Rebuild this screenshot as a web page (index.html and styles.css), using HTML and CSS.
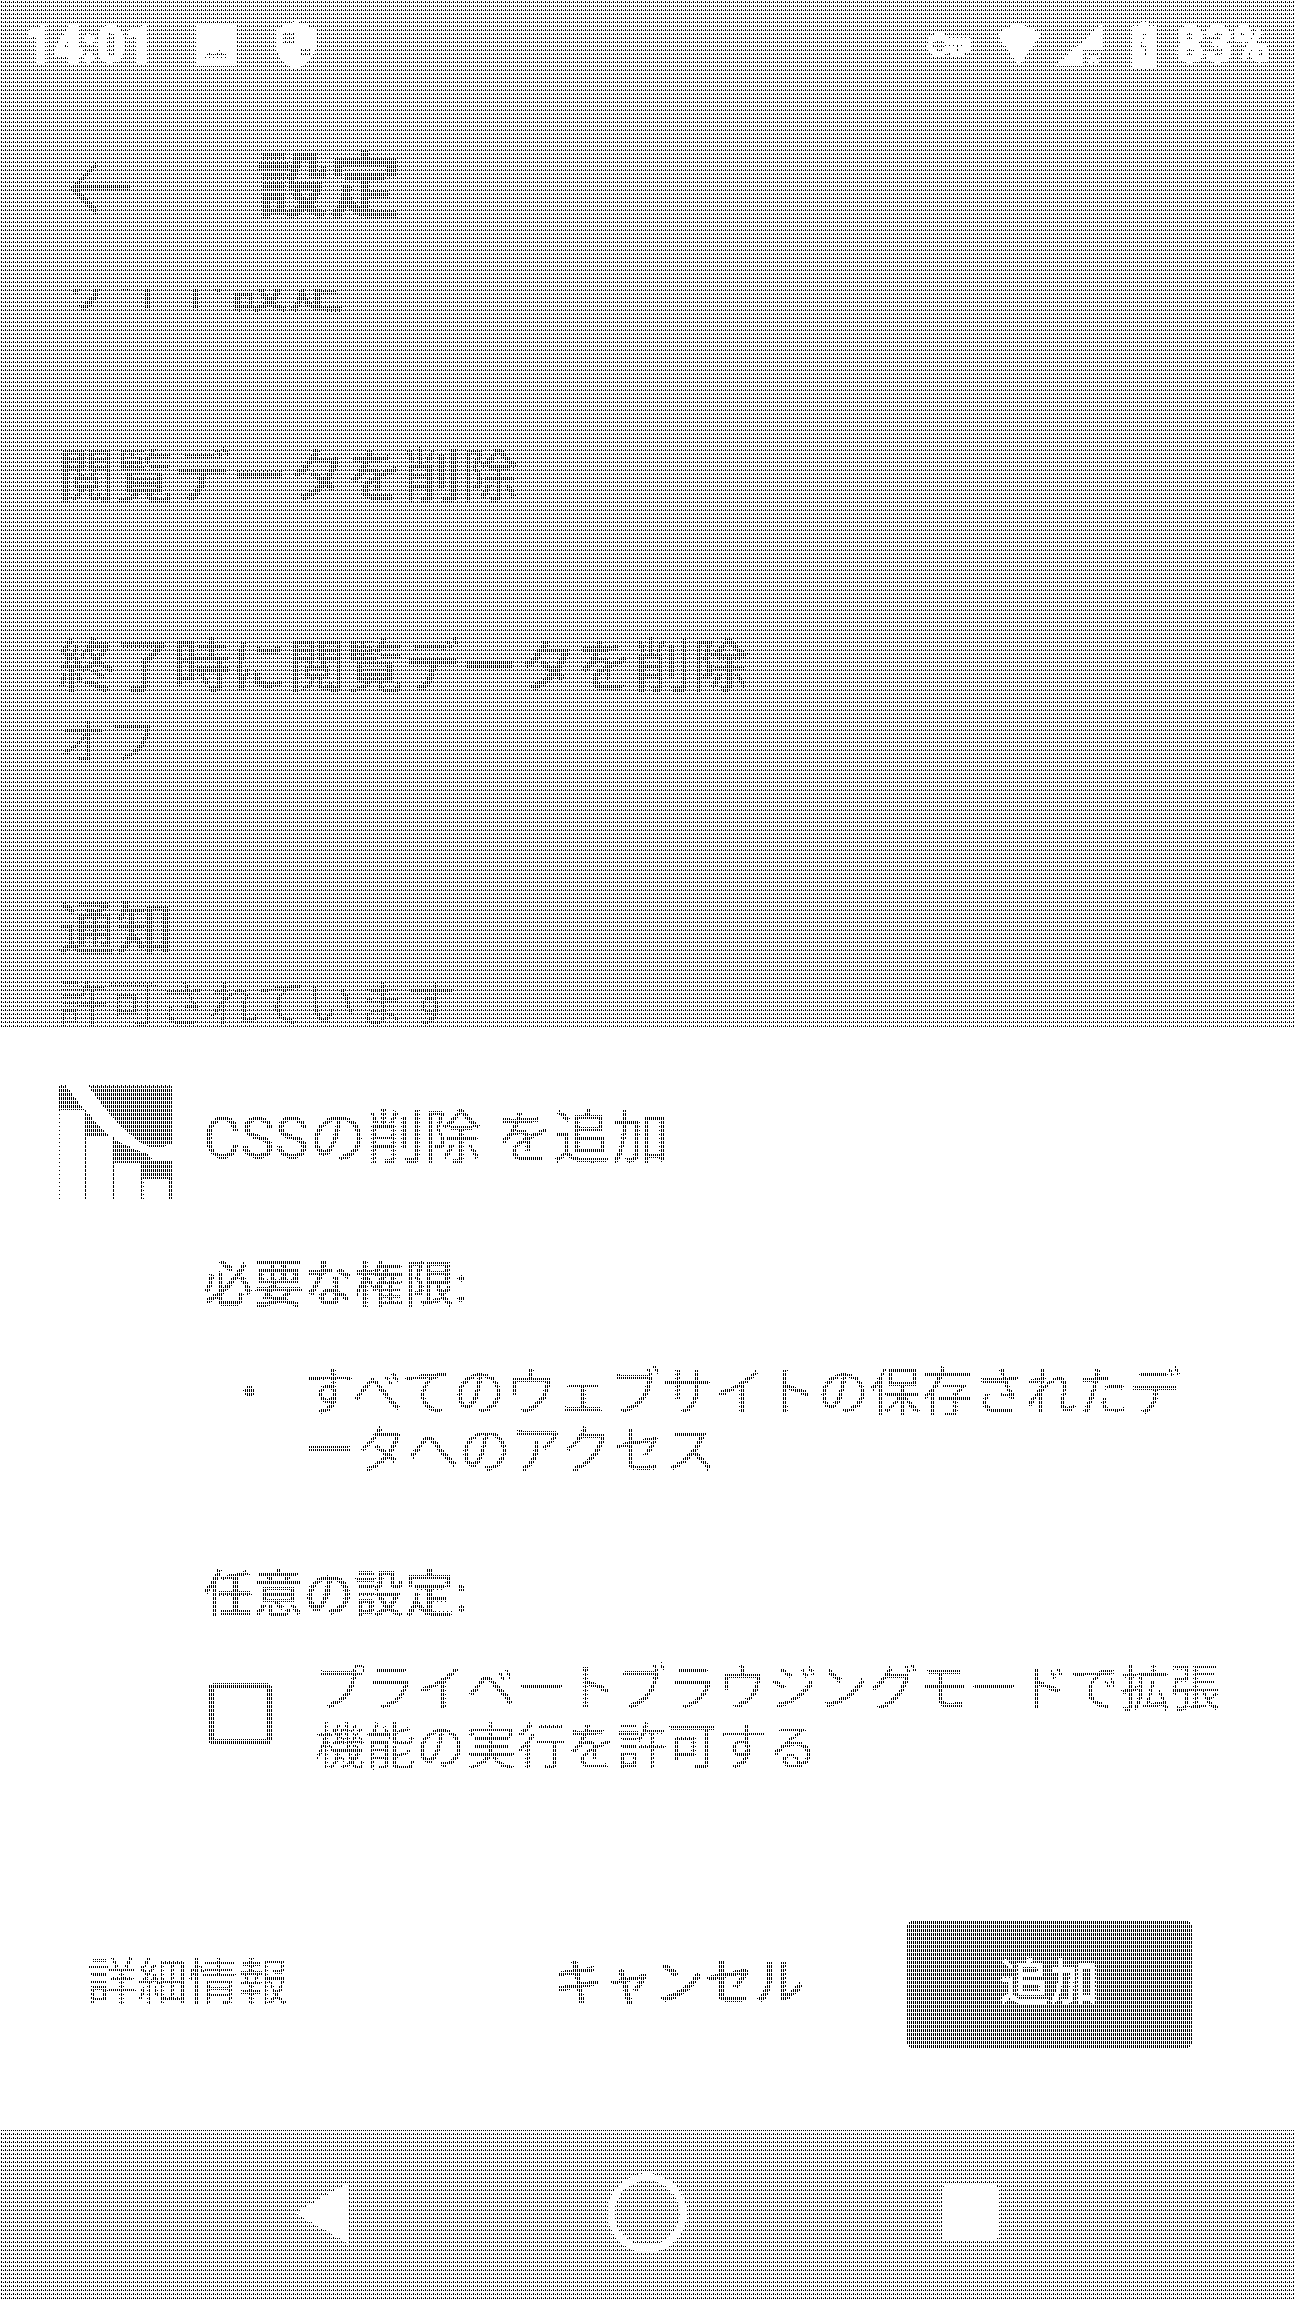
FILE: index.html
```html
<!DOCTYPE html>
<html lang="ja">
<head>
<meta charset="utf-8">
<title>設定</title>
<link rel="stylesheet" href="styles.css">
</head>
<body>
<svg class="defs" width="0" height="0">
  <filter id="threshold" x="0" y="0" width="100%" height="100%" color-interpolation-filters="sRGB">
    <feColorMatrix type="saturate" values="0"/>
    <feComponentTransfer>
      <feFuncR type="linear" slope="255" intercept="-254"/>
      <feFuncG type="linear" slope="255" intercept="-254"/>
      <feFuncB type="linear" slope="255" intercept="-254"/>
    </feComponentTransfer>
  </filter>
</svg>
<div class="screen">
  <header class="status">
    <span class="time">14:01</span>
    <svg class="ic-photo" viewBox="0 0 40 42"><rect width="40" height="42" class="w"/><path d="M6 34 H34 L24 26 L18 30 L15 28Z" class="g"/></svg>
    <svg class="ic-shield" viewBox="0 0 40 48"><path d="M20 0 L40 8 V24 C40 36 30 44 20 48 C10 44 0 36 0 24 V8Z" class="w"/><path d="M6 10 H18 V24 H6Z M24 26 H34 V36 H24Z" class="g"/></svg>
    <span class="grow"></span>
    <svg class="ic-key" viewBox="0 0 44 28"><path d="M3 14 a9 9 0 0 1 17 -4 H41 V18 H35 V23 H27 V18 H20 a9 9 0 0 1 -17 -4Z" class="o"/></svg>
    <svg class="ic-wifi" viewBox="0 0 44 40"><path d="M0 10 Q22 -10 44 10 L22 40Z" class="w"/></svg>
    <svg class="ic-signal" viewBox="0 0 45 40"><path d="M0 40 L45 0 V25 H27 V40Z" class="w"/><path d="M31 29 L43 39 M43 29 L31 39" class="x"/></svg>
    <svg class="ic-batt" viewBox="0 0 23 46"><path d="M7 0 H16 V4 H23 V46 H0 V4 H7Z" class="w"/><path d="M12 10 L8 25 H12 V34" class="b"/></svg>
    <span class="pct">83%</span>
  </header>
  <main class="backdrop">
    <div class="toolbar">
      <svg class="ic-back" viewBox="0 0 64 54"><path d="M62 27 H5 M28 3 L4 27 L28 51" class="a"/></svg>
      <h1 class="title">設定</h1>
    </div>
    <div class="list">
      <p class="row">サイト設定</p>
      <p class="row">閲覧データを削除</p>
      <p class="row">終了時に閲覧データを削除</p>
      <p class="sub">オフ</p>
      <p class="row">通知</p>
      <p class="sub">許可されています</p>
    </div>
  </main>
  <section class="sheet">
    <div class="head">
      <svg class="logo" viewBox="57 75 340 340">
        <path d="M57 75 H80 L135 148 H57Z M138 160 H148 L210 228 H138Z M220 240 H232 Q280 265 335 285 V305 H220Z M147 75 H397 V248 Q340 275 290 235 Q210 170 147 75Z M305 300 H397 V355 H305Z M57 148 H61 V415 H57Z M136 148 H143 V415 H136Z M220 228 H227 V415 H220Z M305 355 H311 V415 H305Z M388 355 H397 V415 H388Z"/>
      </svg>
      <span class="name">CSSの削除 を追加</span>
    </div>
    <h2 class="label">必要な権限:</h2>
    <div class="perm"><span class="dot">・</span><span>すべてのウェブサイトの保存されたデ<br>ータへのアクセス</span></div>
    <h2 class="label opt">任意の設定:</h2>
    <div class="option"><span class="box"></span><span class="opt-text">プライベートブラウジングモードで拡張<br>機能の実行を許可する</span></div>
    <div class="actions">
      <span class="more">詳細情報</span>
      <span class="cancel">キャンセル</span>
      <span class="add">追加</span>
    </div>
  </section>
  <nav class="nav">
    <svg class="ic-tri" viewBox="0 0 54 62"><path d="M54 0 V62 L0 31Z" class="w"/></svg>
    <svg class="ic-home" viewBox="0 0 80 80"><circle cx="40" cy="40" r="36" class="ring"/></svg>
    <svg class="ic-sq" viewBox="0 0 55 56"><rect width="55" height="56" rx="4" class="w"/></svg>
  </nav>
  <svg class="mesh" width="1294" height="2300">
    <defs>
      <pattern id="cell" width="4" height="4" patternUnits="userSpaceOnUse">
        <rect width="4" height="4" class="t0"/>
        <rect x="1" y="2" width="1" height="1" class="t1"/>
        <rect x="3" y="2" width="1" height="1" class="t2"/>
        <rect x="1" y="1" width="1" height="1" class="t3"/>
        <rect x="3" y="1" width="1" height="1" class="t4"/>
        <rect x="3" y="3" width="1" height="1" class="t5"/>
        <rect x="1" y="3" width="1" height="1" class="t6"/>
      </pattern>
    </defs>
    <rect width="1294" height="2300" fill="url(#cell)"/>
  </svg>
</div>
</body>
</html>
```
FILE: styles.css
```css
* { box-sizing: border-box; }
html, body { margin: 0; padding: 0; background: #fff; }
body { font-family: "Roboto", "Noto Sans CJK JP", sans-serif; }
.defs { position: absolute; }
.screen {
  position: relative;
  width: 1294px;
  height: 2300px;
  overflow: hidden;
  background: #fff;
  display: flex;
  flex-direction: column;
  filter: url(#threshold);
  isolation: isolate;
}
.mesh { position: absolute; left: 0; top: 0; z-index: 5; mix-blend-mode: plus-lighter; pointer-events: none; shape-rendering: crispEdges; }
.t0 { fill: #fff; }
.t1 { fill: #0d0d0d; }
.t2 { fill: #1a1a1a; }
.t3 { fill: #404040; }
.t4 { fill: #808080; }
.t5 { fill: #999; }
.t6 { fill: #b3b3b3; }

.w { fill: #fff; }
.g { fill: #aeaeae; }
.o { fill: none; stroke: #fff; stroke-width: 6; }
.x { fill: none; stroke: #fff; stroke-width: 3; }
.b { fill: none; stroke: #aeaeae; stroke-width: 2; }
.a { fill: none; stroke: #000; stroke-width: 5; }
.ring { fill: none; stroke: #fff; stroke-width: 7; }

.status {
  flex: none;
  height: 87px;
  padding: 3px 24px 0 25px;
  background: #aeaeae;
  color: #fff;
  display: flex;
  align-items: center;
  font-size: 50px;
  font-weight: 700;
  -webkit-text-stroke: 2px #fff;
}
.time { margin-right: 42px; }
.ic-photo { width: 40px; height: 42px; margin-right: 40px; }
.ic-shield { width: 40px; height: 48px; }
.grow { flex: 1; }
.ic-key { width: 44px; height: 28px; margin-right: 26px; }
.ic-wifi { width: 44px; height: 40px; margin-right: 14px; }
.ic-signal { width: 47px; height: 42px; margin-right: 31px; }
.ic-batt { width: 23px; height: 46px; margin-right: 20px; }
.pct { line-height: 1; }

.backdrop {
  flex: none;
  height: 940px;
  background: #aeaeae;
  overflow: hidden;
}
.toolbar {
  position: relative;
  z-index: 1;
  height: 201px;
  padding-left: 69px;
  display: flex;
  align-items: center;
  background: #aeaeae;
  box-shadow: 0 4px 10px rgba(0, 0, 0, .3);
}
.ic-back { width: 64px; height: 54px; margin-right: 124px; }
.title { margin: 0; font-size: 72px; line-height: 1; font-weight: 700; color: #000; }
.list { margin-top: -38px; padding-left: 58px; }
.row { margin: 0 0 114px; font-size: 57.6px; line-height: 76px; font-weight: 500; color: #000; }
.sub { margin: -108px 0 121px; font-size: 50px; line-height: 60px; color: #333; }

.sheet {
  flex: none;
  height: 1103px;
  background: #fff;
  padding: 58px 0 0 58px;
  color: #222;
  font-size: 50.3px;
}
.head { display: flex; align-items: center; height: 115px; }
.logo { width: 114px; height: 115px; margin-right: 31px; }
.name { font-size: 57.6px; color: #444; padding-bottom: 20px; }
.label { margin: 55px 0 0 145px; font-size: 50.3px; line-height: 60px; font-weight: 500; color: #222; }
.label.opt { margin-top: 84px; }
.perm { display: flex; margin: 50px 0 0 165px; font-size: 52px; line-height: 58px; color: #444; }
.dot { width: 80px; }
.option { display: flex; align-items: flex-start; margin: 34px 0 0 150px; line-height: 59px; color: #444; }
.box { width: 64px; height: 62px; margin-top: 24px; border: 6px solid #000; border-radius: 6px; margin-right: 43px; flex: none; }
.actions { display: flex; align-items: center; margin: 144px 0 0 29px; font-size: 50.3px; }
.more { margin-right: 265px; color: #444; padding-bottom: 14px; }
.cancel { margin-right: 102px; font-weight: 500; color: #222; padding-bottom: 14px; }
.add {
  width: 285px;
  height: 127px;
  padding-bottom: 14px;
  display: flex;
  align-items: center;
  justify-content: center;
  background: #000;
  color: #fff;
  font-weight: 500;
  border-radius: 6px;
}

.nav {
  flex: none;
  height: 170px;
  background: #aeaeae;
  display: flex;
  align-items: center;
  padding: 0 0 4px 295px;
}
.ic-tri { width: 54px; height: 62px; margin-right: 258px; }
.ic-home { width: 80px; height: 80px; margin-right: 256px; }
.ic-sq { width: 55px; height: 56px; }
```
